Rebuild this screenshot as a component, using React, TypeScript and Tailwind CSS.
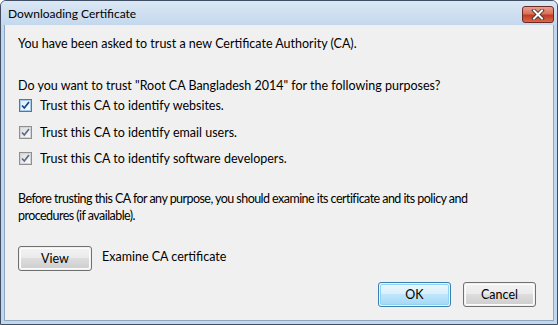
import React from "react";

const font = { fontFamily: 'Lato, "Open Sans", sans-serif' };

function Check({ active }: { active?: boolean }) {
  return (
    <div
      className={`w-[13px] h-[13px] border ${active ? "border-[#3c7fb1]" : "border-[#8f8f8f]"} bg-white flex items-center justify-center`}
    >
      <div
        className={`w-[11px] h-[11px] border ${active ? "border-[#a9cde6] bg-gradient-to-br from-[#dbeefa] to-[#f7fbfe]" : "border-[#d4d4d4] bg-gradient-to-br from-[#dcdcdc] to-[#fbfbfb]"} flex items-center justify-center`}
      >
        <svg width="9" height="9" viewBox="0 0 9 9">
          <path
            d="M1 4.5 L3.3 7 L8 1"
            fill="none"
            stroke={active ? "#1c3f8a" : "#5b6b8a"}
            strokeWidth="1.7"
          />
        </svg>
      </div>
    </div>
  );
}

function Btn({ label, def, w }: { label: string; def?: boolean; w: string }) {
  return (
    <div
      className={`${w} h-[25px] rounded-[3px] border ${def ? "border-[#3c7fb1]" : "border-[#707070]"} p-px`}
    >
      <div
        className={`h-full rounded-[2px] border ${def ? "border-[#8ed5f5] bg-[linear-gradient(#eaf6fd_0%,#d9f0fc_45%,#bee6fd_50%,#a7d9f5_100%)]" : "border-[#fcfcfc] bg-[linear-gradient(#f2f2f2_0%,#ebebeb_45%,#dddddd_50%,#cfcfcf_100%)]"} flex items-center justify-center text-[12.5px] text-black`}
      >
        {label}
      </div>
    </div>
  );
}

export default function App() {
  return (
    <div
      style={font}
      className="w-[558px] h-[325px] bg-[#c2d6ec] border border-[#404f64] rounded-t-[6px] flex flex-col overflow-hidden"
    >
      <div className="h-[24px] shrink-0 bg-[linear-gradient(#dbe7f4,#c4d8ed)] flex items-center justify-between pl-[7px] pr-[3px]">
        <span className="text-[12px] text-black leading-none mt-[1px]">Downloading Certificate</span>
        <div className="w-[32px] h-[17px] mt-[2px] rounded-[3px] border border-[#6b2a24] bg-[linear-gradient(#e8a190_0%,#d9705b_45%,#c33b22_55%,#d76a4a_100%)] flex items-center justify-center">
          <svg width="14" height="11" viewBox="0 0 14 11">
            <path d="M3 1.5 L11 9.5 M11 1.5 L3 9.5" stroke="#2c2c2c" strokeWidth="3.6" strokeLinecap="square" />
            <path d="M3 1.5 L11 9.5 M11 1.5 L3 9.5" stroke="#ffffff" strokeWidth="2" strokeLinecap="square" />
          </svg>
        </div>
      </div>
      <div className="flex-1 mx-[3px] mb-[3px] border border-[#8ea8c2] border-t-0 bg-[#f0f0f0] flex flex-col text-[12.5px] text-black pl-[13px] pr-[14px] leading-[17px]">
        <div className="mt-[10px]">You have been asked to trust a new Certificate Authority (CA).</div>
        <div className="mt-[25px]">Do you want to trust "Root CA Bangladesh 2014" for the following purposes?</div>
        <div className="flex flex-col gap-[9.5px] mt-[3px] pl-px">
          <div className="flex items-center gap-[8px]">
            <Check active />
            <span>Trust this CA to identify websites.</span>
          </div>
          <div className="flex items-center gap-[8px]">
            <Check />
            <span>Trust this CA to identify email users.</span>
          </div>
          <div className="flex items-center gap-[8px]">
            <Check />
            <span>Trust this CA to identify software developers.</span>
          </div>
        </div>
        <div className="mt-[23px] tracking-[-0.55px]">
          Before trusting this CA for any purpose, you should examine its certificate and its policy and
          <br />
          procedures (if available).
        </div>
        <div className="flex items-center mt-[22px]">
          <Btn label="View" w="w-[74px]" />
          <span className="ml-[10px] -mt-[4px]">Examine CA certificate</span>
        </div>
        <div className="flex justify-end gap-[12px] mt-[11px] pr-[3px]">
          <Btn label="OK" def w="w-[73px]" />
          <Btn label="Cancel" w="w-[73px]" />
        </div>
      </div>
    </div>
  );
}
